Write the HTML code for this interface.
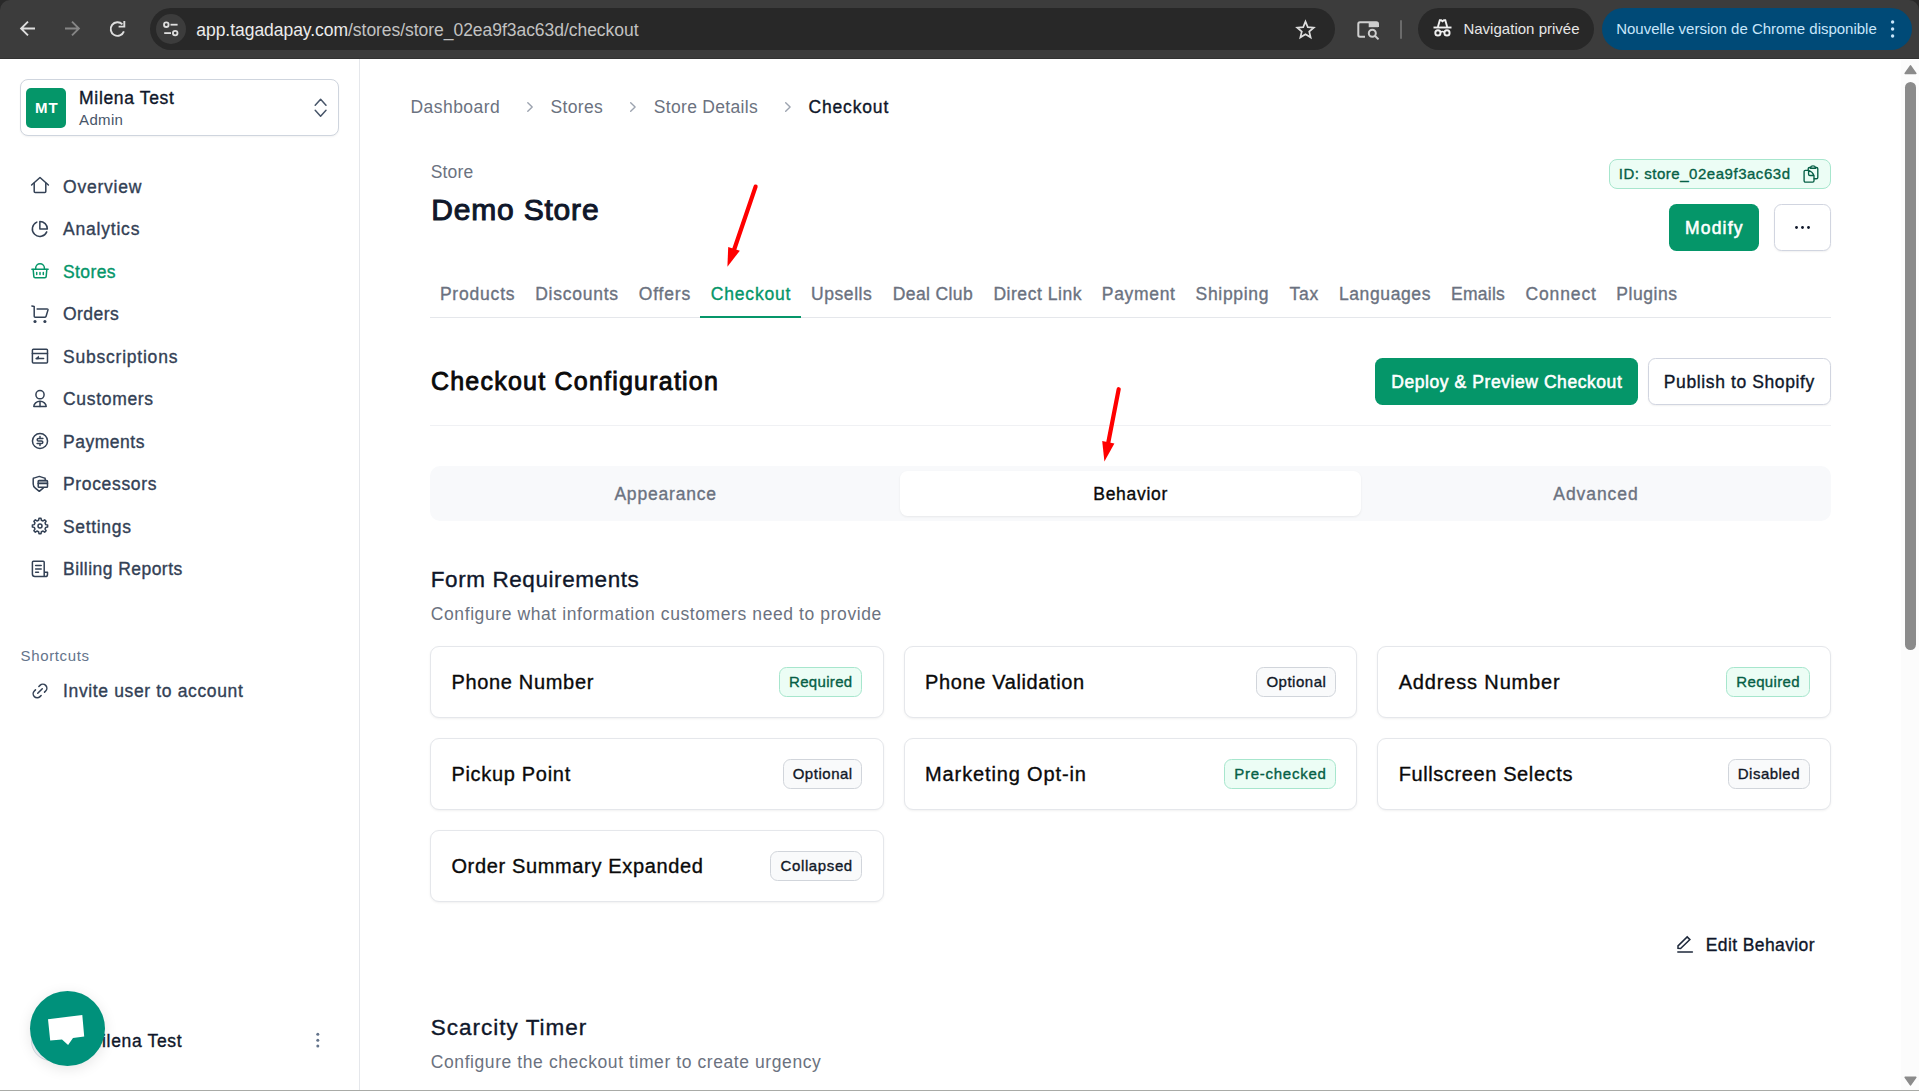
<!DOCTYPE html>
<html lang="en">
<head>
<meta charset="utf-8">
<title>Checkout - Demo Store</title>
<style>
*{box-sizing:border-box;margin:0;padding:0}
html,body{width:1919px;height:1091px;overflow:hidden;background:#fff;font-family:"Liberation Sans",sans-serif}
body{position:relative}
.a{position:absolute}
.t{position:absolute;white-space:nowrap;line-height:1;display:block}
svg{position:absolute;overflow:visible}
/* chrome */
#bar{left:0;top:0;width:1919px;height:58px;background:#3c3c3c;border-top-left-radius:10px;border-top-right-radius:10px}
#barline{left:0;top:58px;width:1919px;height:1px;background:#323232}
#corner{left:0;top:0;width:1919px;height:12px;background:#292929}
#url{left:150px;top:7.5px;width:1185px;height:42px;border-radius:21px;background:#282828}
#site{left:156px;top:14px;width:30px;height:30px;border-radius:15px;background:#3c3c3c}
#sep{left:1400px;top:20px;width:2px;height:19px;background:#6b6b6b;border-radius:1px}
#incog{left:1417.5px;top:7.5px;width:176.5px;height:42px;border-radius:21px;background:#282828}
#upd{left:1601.5px;top:7.5px;width:310.5px;height:42px;border-radius:21px;background:#004a77}
/* sidebar */
#sideline{left:359px;top:59px;width:1px;height:1032px;background:#e5e7eb}
#acct{left:20px;top:79px;width:319px;height:57px;border:1.25px solid #cfd5de;border-radius:8px;background:#fff;box-shadow:0 1px 2px rgba(0,0,0,.05)}
#mt{left:26px;top:88px;width:40px;height:40px;border-radius:5px;background:#059669}
#chat{left:30px;top:991px;width:75px;height:75px;border-radius:50%;background:#00917b;box-shadow:0 3px 14px rgba(0,0,0,.10)}
#avatar{left:30.5px;top:1020.5px;width:40px;height:40px;border-radius:50%;background:#f1f5f9;border:1px solid #d5dae1}
/* main */
#idb{left:1609px;top:159px;width:222px;height:30px;border:1.25px solid #a7e6cd;border-radius:8px;background:#ecfdf5}
#modify{left:1669px;top:204px;width:90px;height:47px;border-radius:7.5px;background:#059669}
#more{left:1774px;top:204px;width:57px;height:47px;border-radius:7.5px;background:#fff;border:1.25px solid #d1d5e0;box-shadow:0 1px 2px rgba(0,0,0,.06)}
#tabline{left:430px;top:317px;width:1401px;height:1px;background:#e5e7eb}
#tabact{left:700px;top:316px;width:100.5px;height:2px;background:#059669}
#deploy{left:1375px;top:358px;width:263px;height:47px;border-radius:7.5px;background:#059669}
#publish{left:1648px;top:358px;width:183px;height:47px;border-radius:7.5px;background:#fff;border:1.25px solid #d1d5e0;box-shadow:0 1px 2px rgba(0,0,0,.06)}
#hr{left:430px;top:425px;width:1401px;height:1px;background:#f0f1f4}
#seg{left:430px;top:466px;width:1401px;height:55px;border-radius:10px;background:#f8f9fb}
#segact{left:900px;top:471px;width:461px;height:45px;border-radius:7.5px;background:#fff;box-shadow:0 1px 2.5px rgba(0,0,0,.07)}
.card{position:absolute;width:453.67px;height:71.25px;border:1.25px solid #e5e7eb;border-radius:9px;background:#fff;box-shadow:0 1px 2.5px rgba(0,0,0,.06)}
.badge{position:absolute;height:30px;border-radius:7.5px;border:1.25px solid #d1d5db;background:#f9fafb}
.badge.g{border-color:#a7e6cd;background:#ecfdf5}
/* scrollbar + bottom */
#sbtrack{left:1901px;top:60px;width:18px;height:1030px;background:#fcfcfc}
#sbthumb{left:1905px;top:82px;width:11px;height:568px;border-radius:6px;background:#8b8b8b}
#bottom{left:0;top:1090px;width:1919px;height:1px;background:#a9aba7}
</style>
</head>
<body>
<!-- ===== browser chrome ===== -->
<div class="a" id="corner"></div>
<div class="a" id="bar"></div>
<div class="a" id="barline"></div>
<div class="a" id="url"></div>
<div class="a" id="site"></div>
<div class="a" id="sep"></div>
<div class="a" id="incog"></div>
<div class="a" id="upd"></div>
<!--CHROMEICONS-->

<!-- ===== sidebar ===== -->
<div class="a" id="sideline"></div>
<div class="a" id="acct"></div>
<div class="a" id="mt"></div>
<!--SIDEICONS-->

<!-- ===== main ===== -->
<div class="a" id="idb"></div>
<div class="a" id="modify"></div>
<div class="a" id="more"></div>
<div class="a" id="tabline"></div>
<div class="a" id="tabact"></div>
<div class="a" id="deploy"></div>
<div class="a" id="publish"></div>
<div class="a" id="hr"></div>
<div class="a" id="seg"></div>
<div class="a" id="segact"></div>
<div class="card" style="left:430px;top:646.25px"></div>
<div class="badge g" style="left:778.9px;top:666.9px;width:83.5px"></div>
<div class="card" style="left:903.67px;top:646.25px"></div>
<div class="badge n" style="left:1256.3px;top:666.9px;width:79.8px"></div>
<div class="card" style="left:1377.33px;top:646.25px"></div>
<div class="badge g" style="left:1726.2px;top:666.9px;width:83.5px"></div>
<div class="card" style="left:430px;top:738.25px"></div>
<div class="badge n" style="left:782.6px;top:758.9px;width:79.8px"></div>
<div class="card" style="left:903.67px;top:738.25px"></div>
<div class="badge g" style="left:1224.1px;top:758.9px;width:112.0px"></div>
<div class="card" style="left:1377.33px;top:738.25px"></div>
<div class="badge n" style="left:1727.8px;top:758.9px;width:82.0px"></div>
<div class="card" style="left:430px;top:830.25px"></div>
<div class="badge n" style="left:770.4px;top:850.9px;width:92.0px"></div>

<div class="a" id="sbtrack"></div>
<div class="a" id="sbthumb"></div>
<div class="a" id="bottom"></div>
<svg class="a" style="left:0;top:0" width="1919" height="1091" viewBox="0 0 1919 1091" fill="none" stroke-linecap="round" stroke-linejoin="round">
<g stroke="#dedede" stroke-width="1.9" stroke-linecap="butt" stroke-linejoin="miter">
<path d="M35 28.5H21.6M28 21.6L21.1 28.5L28 35.4"/>
</g>
<g stroke="#858585" stroke-width="1.9" stroke-linecap="butt" stroke-linejoin="miter">
<path d="M65 28.5H78.4M72 21.6L78.9 28.5L72 35.4"/>
</g>
<g stroke="#dedede" stroke-width="1.9" stroke-linecap="butt" stroke-linejoin="miter">
<path d="M123.9 31.4A6.8 6.8 0 1 1 122.4 24.3"/>
<path d="M124.3 20.9V26.6H118.6" />
</g>
<g stroke="#dedede" stroke-width="1.8" stroke-linecap="butt">
<circle cx="166.3" cy="24.7" r="2.3"/><path d="M170.5 24.7H177.6"/>
<circle cx="175.2" cy="33.1" r="2.3"/><path d="M164.2 33.1H171"/>
</g>
<path d="M1305.50 21.60 L1307.79 27.14 L1313.77 27.61 L1309.21 31.51 L1310.61 37.34 L1305.50 34.20 L1300.39 37.34 L1301.79 31.51 L1297.23 27.61 L1303.21 27.14Z" stroke="#dedede" stroke-width="1.7" stroke-linejoin="miter"/>
<g stroke="#cfcfcf" stroke-width="2" stroke-linecap="butt" stroke-linejoin="round">
<path d="M1365 36.8H1360a1.7 1.7 0 0 1-1.7-1.7V23.9a1.7 1.7 0 0 1 1.7-1.7H1376.3a1.7 1.7 0 0 1 1.7 1.7V27"/>
<path d="M1368.7 22.2H1378V27.2H1368.7Z" fill="#cfcfcf" stroke="none"/>
<circle cx="1372.3" cy="33.2" r="3.5"/><path d="M1374.9 35.8L1378.5 39.4"/>
</g>
<g stroke="#f0f0f0" stroke-width="1.9" stroke-linecap="butt" stroke-linejoin="miter">
<path d="M1433.5 27.5H1451.5"/>
<path d="M1437.9 27L1439.8 20.3H1441.2L1442.5 21.3L1443.9 20.3H1445.3L1447.2 27"/>
<circle cx="1437.9" cy="32.9" r="2.6"/><circle cx="1447" cy="32.9" r="2.6"/>
<path d="M1440.4 32.3Q1442.45 30.8 1444.5 32.3" stroke-width="1.5"/>
</g>
<circle cx="1892.6" cy="22" r="1.7" fill="#c8e6fb"/>
<circle cx="1892.6" cy="29" r="1.7" fill="#c8e6fb"/>
<circle cx="1892.6" cy="36" r="1.7" fill="#c8e6fb"/>
<g stroke="#475569" stroke-width="1.5">
<path d="M315.2 105.2L320.6 99.2L326 105.2"/><path d="M315.2 110.2L320.6 116.2L326 110.2"/>
</g>
<g stroke="#334155" stroke-width="1.5">
<path d="M31.6 185L40 177.5L48.4 185"/><path d="M34.2 183.2V191.5a1 1 0 0 0 1 1H44.8a1 1 0 0 0 1-1V183.2"/>
<g transform="translate(30.85 219.95) scale(0.75)" stroke-width="2"><path d="M21.21 15.89A10 10 0 1 1 8 2.83"/><path d="M22 12A10 10 0 0 0 12 2v10z"/></g>
<path d="M31.9 306.1L34.2 306.4V316.2a1 1 0 0 0 1 1H45a1.2 1.2 0 0 0 1.1-.9L48 309.9a.8.8 0 0 0-.8-.9H37.1"/>
<circle cx="35" cy="321.5" r="1.55" fill="#334155" stroke="none"/><circle cx="44.9" cy="321.5" r="1.55" fill="#334155" stroke="none"/>
<rect x="32.4" y="349.2" width="15.1" height="13.7" rx="1"/><path d="M32.4 353.5H47.5"/>
<path d="M36.2 358.5H43.6"/><path d="M36.2 358.5L38.5 356.3V358.5Z" fill="#334155" stroke-width="1"/>
<circle cx="40" cy="394.7" r="4.1"/><path d="M33.8 406.5A6.2 5.2 0 0 1 46.2 406.5Z"/><path d="M40 401.4V406.5"/>
<circle cx="40" cy="441" r="7.55"/>
<path d="M42.9 438.4H38.5a1.3 1.3 0 0 0 0 2.6H41.5a1.3 1.3 0 0 1 0 2.6H37.1"/><path d="M40 436.4V438.2M40 443.8V445.6"/>
<path d="M43.4 487.9L39.3 491.3L35.3 488.2A5 5 0 0 1 33.2 484.1V478.9a.8.8 0 0 1 .6-.8L39.3 476.4L44.6 478.1a.8.8 0 0 1 .6.8V480.2"/>
<rect x="38.2" y="480.4" width="9.3" height="6.8" rx=".8"/><path d="M38.2 483.4H47.5"/>
<rect x="38.2" y="480.4" width="9.3" height="3" fill="#334155" fill-opacity=".45" stroke="none"/>
<path d="M38.62 520.26 L38.97 518.37 L41.03 518.37 L41.38 520.26 L43.08 520.97 L44.67 519.88 L46.12 521.33 L45.03 522.92 L45.74 524.62 L47.63 524.97 L47.63 527.03 L45.74 527.38 L45.03 529.08 L46.12 530.67 L44.67 532.12 L43.08 531.03 L41.38 531.74 L41.03 533.63 L38.97 533.63 L38.62 531.74 L36.92 531.03 L35.33 532.12 L33.88 530.67 L34.97 529.08 L34.26 527.38 L32.37 527.03 L32.37 524.97 L34.26 524.62 L34.97 522.92 L33.88 521.33 L35.33 519.88 L36.92 520.97Z" stroke-linejoin="round"/><circle cx="40" cy="526" r="2"/>
<path d="M44.2 576.5V562.2a1 1 0 0 0-1-1H33.4a1 1 0 0 0-1 1V574a2.5 2.5 0 0 0 2.5 2.5H45.4a2.1 2.1 0 0 0 2.1-2.1V572.2H44.2"/>
<path d="M35.6 565.5H41.2M35.6 568.9H41.2M35.6 572.2H38.5"/>
<g transform="translate(40 691) rotate(-45) scale(0.8) translate(-12 -12)" stroke-width="1.9"><path d="M9 17H7A5 5 0 0 1 7 7h2"/><path d="M15 7h2a5 5 0 1 1 0 10h-2"/><path d="M8 12h8"/></g>
</g>
<g stroke="#059669" stroke-width="1.5">
<path d="M35.7 269.3V268a4.35 4.35 0 0 1 8.7 0V269.3"/><path d="M31.9 269.3H48.1"/>
<path d="M33.2 269.5L33.8 276.4a1.4 1.4 0 0 0 1.4 1.3H44.8a1.4 1.4 0 0 0 1.4-1.3L46.8 269.5"/>
<path d="M36.7 272.4V274.6M40 272.4V274.6M43.3 272.4V274.6"/>
</g>
<circle cx="317.8" cy="1034.3" r="1.5" fill="#64748b"/>
<circle cx="317.8" cy="1040.2" r="1.5" fill="#64748b"/>
<circle cx="317.8" cy="1046.1" r="1.5" fill="#64748b"/>
<g stroke="#9ca3af" stroke-width="1.4">
<path d="M527.8 102.7L532.1999999999999 107L527.8 111.3"/>
<path d="M630.7 102.7L635.1 107L630.7 111.3"/>
<path d="M785.7 102.7L790.1 107L785.7 111.3"/>
</g>
<g stroke="#065f46" stroke-width="1.35">
<path d="M1808.2 170.2V168.8a1.3 1.3 0 0 1 1.3-1.3H1810.6M1815.4 167.5H1816.5a1.3 1.3 0 0 1 1.3 1.3V177.4a1.4 1.4 0 0 1-1.4 1.4H1814.2"/>
<path d="M1810.4 167.6A2.7 2.4 0 0 1 1815.6 167.6V168.2H1810.4Z"/>
<path d="M1808.6 170.3H1805.3a1.2 1.2 0 0 0-1.2 1.2V180.8a1.3 1.3 0 0 0 1.3 1.3H1812.7a1.3 1.3 0 0 0 1.3-1.3V175.6Q1812.6 171.6 1808.6 170.3V174.2a1.3 1.3 0 0 0 1.3 1.3H1814"/>
</g>
<circle cx="1796.5" cy="227.5" r="1.4" fill="#0f172a"/>
<circle cx="1802.5" cy="227.5" r="1.4" fill="#0f172a"/>
<circle cx="1808.5" cy="227.5" r="1.4" fill="#0f172a"/>
<g stroke="#1e293b" stroke-width="1.5">
<path d="M1677.8 952.1H1692.4"/>
<path d="M1678 948.3V945.9L1687.2 936.9L1689.9 939.6L1680.6 948.5Z" stroke-linejoin="miter"/>
</g>
<g stroke="#ff0000" stroke-width="4.2" fill="#ff0000">
<path d="M755.6 186.6L734 250"/><path d="M727.4 266.7L728.2 247L739.8 250.7Z" stroke="none"/>
<path d="M1118.7 389.2L1108 444"/><path d="M1104.4 461.4L1102.2 441L1114.4 443.4Z" stroke="none"/>
</g>
<path d="M1905.2 73.4L1910.5 65.9L1915.8 73.4Z" fill="#8b8b8b" stroke="#8b8b8b" stroke-width="1.6" stroke-linejoin="round"/>
<path d="M1905.2 1077.4L1910.5 1084.9L1915.8 1077.4Z" fill="#8b8b8b" stroke="#8b8b8b" stroke-width="1.6" stroke-linejoin="round"/>
</svg>

<!-- ===== text ===== -->
<span class="t" style="left:196.3px;top:22px;font-size:17.5px;color:#ececec;letter-spacing:-0.041px;">app.tagadapay.com<span style="color:#c2c2c2">/stores/store_02ea9f3ac63d/checkout</span></span>
<span class="t" style="left:1463.4px;top:21px;font-size:15px;color:#e6e6e6;letter-spacing:0.018px;">Navigation privée</span>
<span class="t" style="left:1616.2px;top:21px;font-size:15px;color:#c8e6fb;letter-spacing:-0.011px;">Nouvelle version de Chrome disponible</span>
<span class="t" style="left:34.9px;top:100px;font-size:15px;color:#ffffff;font-weight:700;letter-spacing:1.228px;">MT</span>
<span class="t" style="left:79.1px;top:90px;font-size:17.5px;color:#0f172a;-webkit-text-stroke:0.35px;letter-spacing:0.660px;">Milena Test</span>
<span class="t" style="left:79.1px;top:112px;font-size:15px;color:#475569;letter-spacing:0.317px;">Admin</span>
<span class="t" style="left:63.0px;top:179px;font-size:17.5px;color:#334155;-webkit-text-stroke:0.35px;letter-spacing:0.780px;">Overview</span>
<span class="t" style="left:63.0px;top:221px;font-size:17.5px;color:#334155;-webkit-text-stroke:0.35px;letter-spacing:0.796px;">Analytics</span>
<span class="t" style="left:63.0px;top:264px;font-size:17.5px;color:#059669;-webkit-text-stroke:0.35px;letter-spacing:0.384px;">Stores</span>
<span class="t" style="left:63.0px;top:306px;font-size:17.5px;color:#334155;-webkit-text-stroke:0.35px;letter-spacing:0.463px;">Orders</span>
<span class="t" style="left:63.0px;top:349px;font-size:17.5px;color:#334155;-webkit-text-stroke:0.35px;letter-spacing:0.778px;">Subscriptions</span>
<span class="t" style="left:63.0px;top:391px;font-size:17.5px;color:#334155;-webkit-text-stroke:0.35px;letter-spacing:0.686px;">Customers</span>
<span class="t" style="left:63.0px;top:434px;font-size:17.5px;color:#334155;-webkit-text-stroke:0.35px;letter-spacing:0.527px;">Payments</span>
<span class="t" style="left:63.0px;top:476px;font-size:17.5px;color:#334155;-webkit-text-stroke:0.35px;letter-spacing:0.652px;">Processors</span>
<span class="t" style="left:63.0px;top:519px;font-size:17.5px;color:#334155;-webkit-text-stroke:0.35px;letter-spacing:0.667px;">Settings</span>
<span class="t" style="left:63.0px;top:561px;font-size:17.5px;color:#334155;-webkit-text-stroke:0.35px;letter-spacing:0.455px;">Billing Reports</span>
<span class="t" style="left:20.6px;top:648px;font-size:15px;color:#64748b;letter-spacing:0.628px;">Shortcuts</span>
<span class="t" style="left:63.1px;top:683px;font-size:17.5px;color:#334155;-webkit-text-stroke:0.35px;letter-spacing:0.635px;">Invite user to account</span>
<span class="t" style="left:86.8px;top:1033px;font-size:17.5px;color:#0f172a;-webkit-text-stroke:0.35px;letter-spacing:0.660px;">Milena Test</span>
<span class="t" style="left:410.4px;top:99px;font-size:17.5px;color:#6b7280;letter-spacing:0.472px;">Dashboard</span>
<span class="t" style="left:550.6px;top:99px;font-size:17.5px;color:#6b7280;letter-spacing:0.304px;">Stores</span>
<span class="t" style="left:653.8px;top:99px;font-size:17.5px;color:#6b7280;letter-spacing:0.309px;">Store Details</span>
<span class="t" style="left:808.5px;top:99px;font-size:17.5px;color:#0f172a;-webkit-text-stroke:0.35px;letter-spacing:0.837px;">Checkout</span>
<span class="t" style="left:430.7px;top:164px;font-size:17.5px;color:#6b7280;letter-spacing:0.193px;">Store</span>
<span class="t" style="left:431.3px;top:195px;font-size:30px;color:#0f172a;-webkit-text-stroke:1.02px;letter-spacing:0.802px;">Demo Store</span>
<span class="t" style="left:1618.8px;top:166px;font-size:15px;color:#065f46;-webkit-text-stroke:0.35px;letter-spacing:0.527px;">ID: store_02ea9f3ac63d</span>
<span class="t" style="left:1685.0px;top:220px;font-size:17.5px;color:#ffffff;-webkit-text-stroke:0.55px;letter-spacing:1.191px;">Modify</span>
<span class="t" style="left:439.9px;top:286px;font-size:17.5px;color:#6b7280;-webkit-text-stroke:0.35px;letter-spacing:0.805px;">Products</span>
<span class="t" style="left:535.2px;top:286px;font-size:17.5px;color:#6b7280;-webkit-text-stroke:0.35px;letter-spacing:0.757px;">Discounts</span>
<span class="t" style="left:638.8px;top:286px;font-size:17.5px;color:#6b7280;-webkit-text-stroke:0.35px;letter-spacing:0.811px;">Offers</span>
<span class="t" style="left:710.8px;top:286px;font-size:17.5px;color:#059669;-webkit-text-stroke:0.35px;letter-spacing:0.809px;">Checkout</span>
<span class="t" style="left:811.0px;top:286px;font-size:17.5px;color:#6b7280;-webkit-text-stroke:0.35px;letter-spacing:0.568px;">Upsells</span>
<span class="t" style="left:892.8px;top:286px;font-size:17.5px;color:#6b7280;-webkit-text-stroke:0.35px;letter-spacing:0.380px;">Deal Club</span>
<span class="t" style="left:993.4px;top:286px;font-size:17.5px;color:#6b7280;-webkit-text-stroke:0.35px;letter-spacing:0.543px;">Direct Link</span>
<span class="t" style="left:1101.8px;top:286px;font-size:17.5px;color:#6b7280;-webkit-text-stroke:0.35px;letter-spacing:0.673px;">Payment</span>
<span class="t" style="left:1195.6px;top:286px;font-size:17.5px;color:#6b7280;-webkit-text-stroke:0.35px;letter-spacing:0.668px;">Shipping</span>
<span class="t" style="left:1289.4px;top:286px;font-size:17.5px;color:#6b7280;-webkit-text-stroke:0.35px;letter-spacing:0.833px;">Tax</span>
<span class="t" style="left:1338.9px;top:286px;font-size:17.5px;color:#6b7280;-webkit-text-stroke:0.35px;letter-spacing:0.622px;">Languages</span>
<span class="t" style="left:1451.1px;top:286px;font-size:17.5px;color:#6b7280;-webkit-text-stroke:0.35px;letter-spacing:0.237px;">Emails</span>
<span class="t" style="left:1525.4px;top:286px;font-size:17.5px;color:#6b7280;-webkit-text-stroke:0.35px;letter-spacing:0.902px;">Connect</span>
<span class="t" style="left:1616.2px;top:286px;font-size:17.5px;color:#6b7280;-webkit-text-stroke:0.35px;letter-spacing:0.566px;">Plugins</span>
<span class="t" style="left:430.9px;top:369px;font-size:25px;color:#0a0a0a;-webkit-text-stroke:0.85px;letter-spacing:1.225px;">Checkout Configuration</span>
<span class="t" style="left:1391.3px;top:374px;font-size:17.5px;color:#ffffff;-webkit-text-stroke:0.55px;letter-spacing:0.566px;">Deploy &amp; Preview Checkout</span>
<span class="t" style="left:1663.8px;top:374px;font-size:17.5px;color:#0f172a;-webkit-text-stroke:0.35px;letter-spacing:0.612px;">Publish to Shopify</span>
<span class="t" style="left:614.4px;top:486px;font-size:17.5px;color:#6b7280;-webkit-text-stroke:0.35px;letter-spacing:0.801px;">Appearance</span>
<span class="t" style="left:1093.3px;top:486px;font-size:17.5px;color:#0a0a0a;-webkit-text-stroke:0.35px;letter-spacing:0.703px;">Behavior</span>
<span class="t" style="left:1553.3px;top:486px;font-size:17.5px;color:#6b7280;-webkit-text-stroke:0.35px;letter-spacing:0.937px;">Advanced</span>
<span class="t" style="left:430.8px;top:569px;font-size:22.5px;color:#0f172a;-webkit-text-stroke:0.35px;letter-spacing:0.574px;">Form Requirements</span>
<span class="t" style="left:430.8px;top:606px;font-size:17.5px;color:#6b7280;letter-spacing:0.593px;">Configure what information customers need to provide</span>
<span class="t" style="left:451.4px;top:672px;font-size:20px;color:#0a0a0a;-webkit-text-stroke:0.35px;letter-spacing:0.679px;">Phone Number</span>
<span class="t" style="left:789.0px;top:674px;font-size:15px;color:#065f46;-webkit-text-stroke:0.35px;letter-spacing:0.332px;">Required</span>
<span class="t" style="left:925.1px;top:672px;font-size:20px;color:#0a0a0a;-webkit-text-stroke:0.35px;letter-spacing:0.617px;">Phone Validation</span>
<span class="t" style="left:1266.4px;top:674px;font-size:15px;color:#111827;-webkit-text-stroke:0.35px;letter-spacing:0.518px;">Optional</span>
<span class="t" style="left:1398.7px;top:672px;font-size:20px;color:#0a0a0a;-webkit-text-stroke:0.35px;letter-spacing:0.841px;">Address Number</span>
<span class="t" style="left:1736.3px;top:674px;font-size:15px;color:#065f46;-webkit-text-stroke:0.35px;letter-spacing:0.332px;">Required</span>
<span class="t" style="left:451.4px;top:764px;font-size:20px;color:#0a0a0a;-webkit-text-stroke:0.35px;letter-spacing:0.693px;">Pickup Point</span>
<span class="t" style="left:792.7px;top:766px;font-size:15px;color:#111827;-webkit-text-stroke:0.35px;letter-spacing:0.518px;">Optional</span>
<span class="t" style="left:925.1px;top:764px;font-size:20px;color:#0a0a0a;-webkit-text-stroke:0.35px;letter-spacing:0.864px;">Marketing Opt-in</span>
<span class="t" style="left:1234.2px;top:766px;font-size:15px;color:#065f46;-webkit-text-stroke:0.35px;letter-spacing:0.748px;">Pre-checked</span>
<span class="t" style="left:1398.7px;top:764px;font-size:20px;color:#0a0a0a;-webkit-text-stroke:0.35px;letter-spacing:0.606px;">Fullscreen Selects</span>
<span class="t" style="left:1737.8px;top:766px;font-size:15px;color:#111827;-webkit-text-stroke:0.35px;letter-spacing:0.475px;">Disabled</span>
<span class="t" style="left:451.4px;top:856px;font-size:20px;color:#0a0a0a;-webkit-text-stroke:0.35px;letter-spacing:0.648px;">Order Summary Expanded</span>
<span class="t" style="left:780.5px;top:858px;font-size:15px;color:#111827;-webkit-text-stroke:0.35px;letter-spacing:0.623px;">Collapsed</span>
<span class="t" style="left:1705.7px;top:937px;font-size:17.5px;color:#0f172a;-webkit-text-stroke:0.35px;letter-spacing:0.401px;">Edit Behavior</span>
<span class="t" style="left:430.8px;top:1017px;font-size:22.5px;color:#0f172a;-webkit-text-stroke:0.35px;letter-spacing:0.999px;">Scarcity Timer</span>
<span class="t" style="left:430.8px;top:1054px;font-size:17.5px;color:#6b7280;letter-spacing:0.582px;">Configure the checkout timer to create urgency</span>

<!-- ===== overlays ===== -->
<div class="a" id="avatar"></div>
<div class="a" id="chat"></div>
<svg class="a" style="left:0;top:0" width="1919" height="1091" viewBox="0 0 1919 1091">
<path d="M48 1019.2L82.3 1015L84.2 1036.4L73 1038L68.1 1045.1L62 1039.4L50.2 1040.5Z" fill="#ffffff"/>
</svg>
</body>
</html>
